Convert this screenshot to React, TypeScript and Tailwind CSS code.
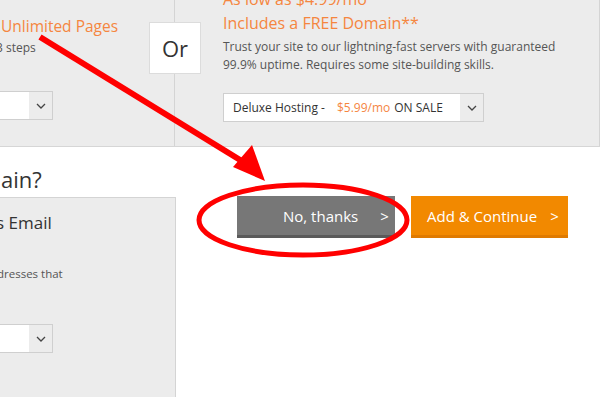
import React from "react";

const font = { fontFamily: '"Open Sans", "Noto Sans", Arial, sans-serif' };

function Chevron() {
  return (
    <svg width="10" height="6" viewBox="0 0 10 6" fill="none">
      <path d="M1 1l4 4 4-4" stroke="#444" strokeWidth="1.3" />
    </svg>
  );
}

function SelectBox({ width, children }: { width: string; children?: React.ReactNode }) {
  return (
    <div className={`flex h-[29px] ${width} border border-[#cfcfcf] bg-white`}>
      <div className="flex flex-1 items-center overflow-hidden whitespace-nowrap pl-[9px] text-[12px] text-[#333]">
        {children}
      </div>
      <div className="flex w-[23px] items-center justify-center bg-[#ececec]">
        <Chevron />
      </div>
    </div>
  );
}

export default function App() {
  return (
    <div className="relative h-[397px] w-[600px] overflow-hidden bg-white" style={font}>
      {/* top section */}
      <div className="relative flex h-[147px] border-b border-[#d6d6d6] bg-[#ececec]">
        <div className="w-[175px] shrink-0 overflow-hidden border-r border-[#d4d4d4] pt-[15px]">
          <div className="ml-[1px] whitespace-nowrap text-[15.5px] leading-[22px] text-[#f5863f]">Unlimited Pages</div>
          <div className="ml-[-4px] mt-[3px] whitespace-nowrap text-[12px] leading-[16px] text-[#555]">3 steps</div>
          <div className="mt-[35px] ml-[-10px]">
            <SelectBox width="w-[63px]" />
          </div>
        </div>
        <div className="flex-1 border-r border-[#d4d4d4] pl-[48px]">
          <div className="mt-[-12px] whitespace-nowrap text-[16px] leading-[22px] text-[#f5863f]">As low as $4.99/mo</div>
          <div className="mt-[2px] whitespace-nowrap text-[16px] leading-[22px] text-[#f5863f]">Includes a FREE Domain**</div>
          <div className="mt-[4px] text-[12px] leading-[18px] text-[#555]">
            Trust your site to our lightning-fast servers with guaranteed
            <br />
            99.9% uptime. Requires some site-building skills.
          </div>
          <div className="mt-[19px]">
            <SelectBox width="w-[261px]">
              <span>Deluxe Hosting -</span>
              <span className="ml-[12px] text-[#f5863f]">$5.99/mo</span>
              <span className="ml-[4px]">ON SALE</span>
            </SelectBox>
          </div>
        </div>
        <div className="absolute left-[149px] top-[22px] flex h-[52px] w-[52px] items-center justify-center border border-[#dcdcdc] bg-white text-[22px] text-[#333]">
          Or
        </div>
      </div>

      {/* bottom section */}
      <div className="flex">
        <div className="w-[176px] shrink-0">
          <div className="ml-[1px] mt-[17px] h-[33px] text-[22px] leading-[30px] text-[#333]">ain?</div>
          <div className="ml-[-1px] h-[210px] border border-[#d4d4d4] bg-[#ececec] pt-[13px]">
            <div className="ml-[-4px] whitespace-nowrap text-[17px] leading-[24px] text-[#333]">s Email</div>
            <div className="ml-[-3px] mt-[31px] whitespace-nowrap text-[11.5px] leading-[16px] text-[#555]">dresses that</div>
            <div className="ml-[-10px] mt-[42px]">
              <SelectBox width="w-[63px]" />
            </div>
          </div>
        </div>
        <div className="ml-[61px] mt-[49px] flex gap-[16px]">
          <div className="flex h-[42px] w-[158px] items-center border-b-[3px] border-[#5a5a5a] bg-[#777777] pl-[46px] pt-[2px] text-[15px] text-white">
            <span>No, thanks</span>
            <span className="ml-[22px]">&gt;</span>
          </div>
          <div className="flex h-[42px] w-[157px] items-center border-b-[3px] border-[#df7a00] bg-[#f28900] pl-[16px] pt-[2px] text-[15px] text-white">
            <span>Add &amp; Continue</span>
            <span className="ml-[13px]">&gt;</span>
          </div>
        </div>
      </div>

      {/* red annotation overlay */}
      <svg className="pointer-events-none absolute left-0 top-0" width="600" height="397" viewBox="0 0 600 397">
        <line x1="40" y1="37" x2="245" y2="163" stroke="#ff0000" strokeWidth="6" />
        <polygon points="265,181 233,167 252,145" fill="#ff0000" />
        <ellipse cx="303" cy="220" rx="104" ry="35" fill="none" stroke="#ff0000" strokeWidth="5" />
      </svg>
    </div>
  );
}
